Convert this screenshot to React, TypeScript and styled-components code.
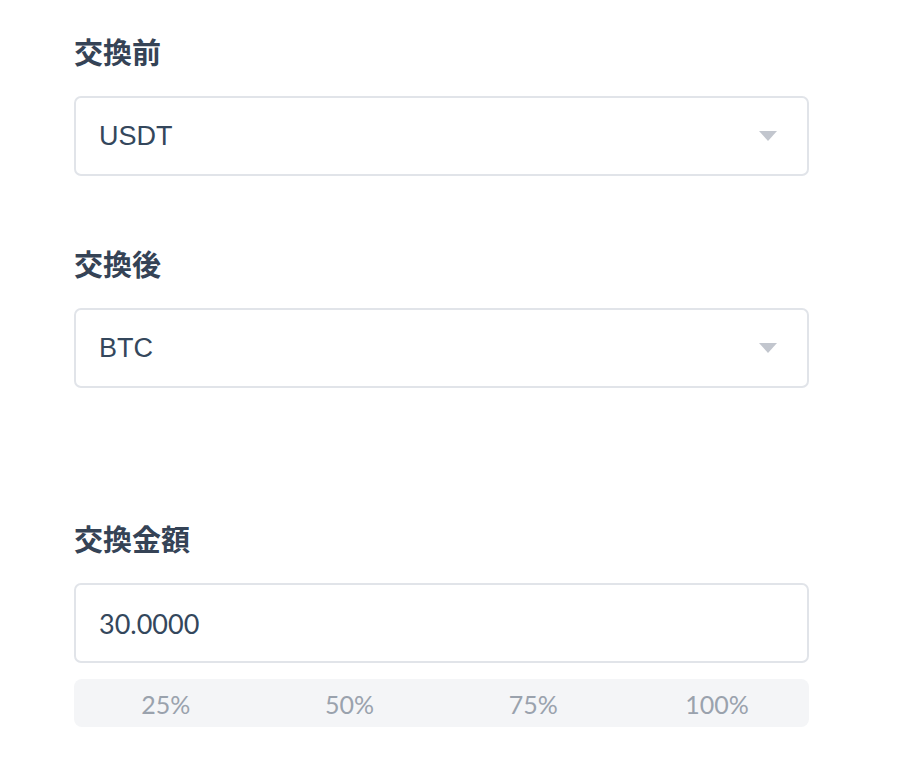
import React from "react";
import styled, { createGlobalStyle } from "styled-components";

const Global = createGlobalStyle`
  html, body { margin: 0; padding: 0; background: #fff; }
  body { font-family: "Liberation Sans", "Noto Sans CJK JP", sans-serif; }
`;

const Page = styled.div`
  padding: 31px 0 0 74px;
  width: 735px;
`;

const Field = styled.div<{ $gap: number }>`
  display: flex;
  flex-direction: column;
  margin-bottom: ${(p) => p.$gap}px;
`;

const Label = styled.div`
  font-family: "Noto Sans CJK JP", sans-serif;
  font-weight: 700;
  font-size: 29px;
  line-height: 40px;
  color: #354356;
  margin-bottom: 25px;
`;

const Box = styled.div`
  box-sizing: border-box;
  height: 80px;
  border: 2px solid #e1e4e9;
  border-radius: 7px;
  display: flex;
  align-items: center;
  justify-content: space-between;
  padding: 0 30px 0 23px;
  font-family: "Liberation Sans", Arial, sans-serif;
  font-size: 27px;
  color: #34475c;
`;

const AmountText = styled.span`
  font-family: Lato, "Liberation Sans", sans-serif;
  font-size: 27px;
  color: #34475c;
`;

const Caret = styled.span`
  width: 0;
  height: 0;
  border-left: 9px solid transparent;
  border-right: 9px solid transparent;
  border-top: 10px solid #c2c6ce;
`;

const Percents = styled.div`
  margin-top: 16px;
  height: 48px;
  background: #f4f5f7;
  border-radius: 8px;
  display: grid;
  grid-template-columns: repeat(4, 1fr);
  align-items: center;
`;

const Pct = styled.span`
  text-align: center;
  font-family: Lato, "Liberation Sans", sans-serif;
  font-size: 25px;
  color: #9aa2ad;
  padding-top: 2px;
`;

export default function App() {
  return (
    <>
      <Global />
      <Page>
        <Field $gap={67}>
          <Label>交換前</Label>
          <Box>
            <span>USDT</span>
            <Caret />
          </Box>
        </Field>
        <Field $gap={130}>
          <Label>交換後</Label>
          <Box>
            <span>BTC</span>
            <Caret />
          </Box>
        </Field>
        <Field $gap={0}>
          <Label>交換金額</Label>
          <Box>
            <AmountText>30.0000</AmountText>
          </Box>
          <Percents>
            {["25%", "50%", "75%", "100%"].map((p) => (
              <Pct key={p}>{p}</Pct>
            ))}
          </Percents>
        </Field>
      </Page>
    </>
  );
}
